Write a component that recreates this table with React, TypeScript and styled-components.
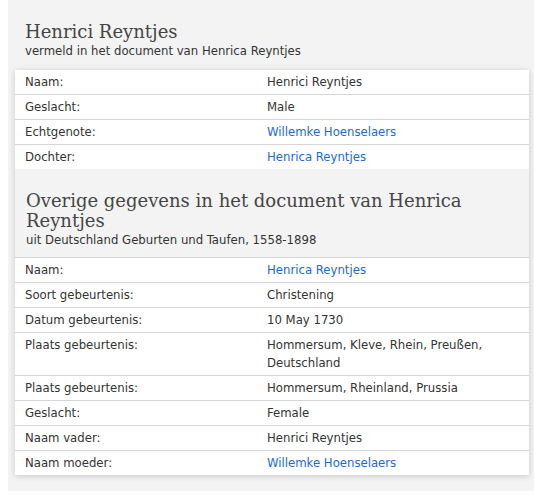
import React from "react";
import styled, { createGlobalStyle } from "styled-components";

const Global = createGlobalStyle`
  html, body { margin: 0; padding: 0; background: #ffffff; }
  body { font-family: "DejaVu Sans Condensed", "DejaVu Sans", Verdana, sans-serif; font-stretch: condensed; color: #333333; }
`;

const Page = styled.div`
  margin-left: 8px;
  background: #f3f3f3;
  padding: 22px 5px 16px 7px;
`;

const Header = styled.div<{ $boxed?: boolean }>`
  padding: ${(p) => (p.$boxed ? "22px 10px 8px 11px" : "0 10px 10px 10px")};
  background: #f3f3f3;
`;

const Title = styled.h2`
  margin: 0;
  font-family: "DejaVu Serif", Georgia, serif;
  font-stretch: normal;
  font-weight: normal;
  font-size: 18px;
  line-height: 20px;
  color: #454545;
`;

const Subtitle = styled.div`
  font-size: 13px;
  line-height: 18px;
  color: #333333;
`;

const Card = styled.div`
  background: #ffffff;
  box-shadow: 0 1px 6px rgba(0, 0, 0, 0.18);
`;

const Row = styled.div`
  display: grid;
  grid-template-columns: 242px 1fr;
  border-top: 1px solid #d6d6d6;
  font-size: 13px;
  line-height: 18px;
  &:first-child { border-top: none; }
`;

const Cell = styled.div`
  padding: 3px 10px;
  color: #333333;
`;

const Link = styled.a`
  color: #1a6ad8;
  text-decoration: none;
`;

type Item = { label: string; value: string; link?: boolean };

const first: Item[] = [
  { label: "Naam:", value: "Henrici Reyntjes" },
  { label: "Geslacht:", value: "Male" },
  { label: "Echtgenote:", value: "Willemke Hoenselaers", link: true },
  { label: "Dochter:", value: "Henrica Reyntjes", link: true },
];

const second: Item[] = [
  { label: "Naam:", value: "Henrica Reyntjes", link: true },
  { label: "Soort gebeurtenis:", value: "Christening" },
  { label: "Datum gebeurtenis:", value: "10 May 1730" },
  { label: "Plaats gebeurtenis:", value: "Hommersum, Kleve, Rhein, Preußen, Deutschland" },
  { label: "Plaats gebeurtenis:", value: "Hommersum, Rheinland, Prussia" },
  { label: "Geslacht:", value: "Female" },
  { label: "Naam vader:", value: "Henrici Reyntjes" },
  { label: "Naam moeder:", value: "Willemke Hoenselaers", link: true },
];

const Rows = ({ items }: { items: Item[] }) => (
  <div>
    {items.map((it, i) => (
      <Row key={i}>
        <Cell>{it.label}</Cell>
        <Cell>{it.link ? <Link href="#">{it.value}</Link> : it.value}</Cell>
      </Row>
    ))}
  </div>
);

const SecondRows = styled.div`
  border-top: 1px solid #d6d6d6;
`;

export default function App() {
  return (
    <>
      <Global />
      <Page>
        <Header>
          <Title>Henrici Reyntjes</Title>
          <Subtitle>vermeld in het document van Henrica Reyntjes</Subtitle>
        </Header>
        <Card>
          <Rows items={first} />
          <Header $boxed>
            <Title>Overige gegevens in het document van Henrica Reyntjes</Title>
            <Subtitle>uit Deutschland Geburten und Taufen, 1558-1898</Subtitle>
          </Header>
          <SecondRows>
            <Rows items={second} />
          </SecondRows>
        </Card>
      </Page>
    </>
  );
}
